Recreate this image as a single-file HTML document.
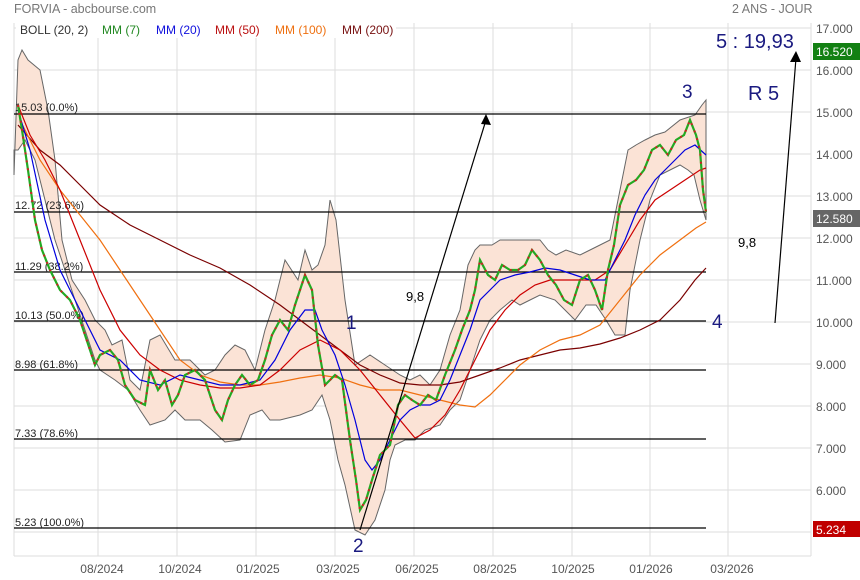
<!DOCTYPE html><html><head><meta charset="utf-8"><style>body{margin:0;background:#fff}svg{display:block;font-family:"Liberation Sans",sans-serif}</style></head><body>
<svg width="860" height="580" viewBox="0 0 860 580">
<rect width="860" height="580" fill="#fff"/>
<text x="14" y="13" font-size="12.5" fill="#777">FORVIA - abcbourse.com</text>
<text x="732" y="13" font-size="12.5" fill="#777">2 ANS - JOUR</text>
<g stroke="#ddd" stroke-width="1">
<line x1="14" y1="28" x2="811" y2="28"/><line x1="14" y1="70" x2="811" y2="70"/><line x1="14" y1="112" x2="811" y2="112"/><line x1="14" y1="154" x2="811" y2="154"/><line x1="14" y1="196" x2="811" y2="196"/><line x1="14" y1="238" x2="811" y2="238"/><line x1="14" y1="280" x2="811" y2="280"/><line x1="14" y1="322" x2="811" y2="322"/><line x1="14" y1="364" x2="811" y2="364"/><line x1="14" y1="406" x2="811" y2="406"/><line x1="14" y1="448" x2="811" y2="448"/><line x1="14" y1="490" x2="811" y2="490"/><line x1="14" y1="532" x2="811" y2="532"/>
<line x1="98" y1="23" x2="98" y2="556"/><line x1="177" y1="23" x2="177" y2="556"/><line x1="256" y1="23" x2="256" y2="556"/><line x1="335" y1="23" x2="335" y2="556"/><line x1="414" y1="23" x2="414" y2="556"/><line x1="493" y1="23" x2="493" y2="556"/><line x1="572" y1="23" x2="572" y2="556"/><line x1="650" y1="23" x2="650" y2="556"/><line x1="728" y1="23" x2="728" y2="556"/>
<line x1="14" y1="23" x2="14" y2="556"/><line x1="811" y1="23" x2="811" y2="556"/><line x1="14" y1="556" x2="811" y2="556"/>
</g>
<polygon fill="#fbe3d6" stroke="#666" stroke-width="1" points="14,175 18,60 22,50 28,60 40,70 48,110 55,160 62,240 72,280 85,300 95,320 105,330 112,345 122,340 130,380 140,390 150,340 160,335 175,360 190,360 205,375 215,370 225,355 235,345 245,350 255,370 265,330 275,300 285,260 298,280 305,250 312,270 318,265 325,245 330,200 336,220 345,300 355,365 370,355 385,365 400,375 410,380 420,375 430,385 440,370 450,335 460,310 468,265 475,250 480,245 492,245 500,240 520,240 540,240 548,250 556,255 566,250 580,255 590,250 600,245 610,240 620,190 628,150 636,145 645,140 655,135 665,132 680,120 695,115 702,105 706,100 706,220 700,200 694,175 688,170 680,165 670,170 660,175 650,200 640,240 630,290 625,335 615,335 606,320 596,305 586,305 575,320 565,310 555,300 540,295 530,300 520,305 512,300 500,310 490,320 480,340 470,370 460,400 450,410 440,425 425,430 415,440 405,440 395,445 390,460 385,490 375,520 365,535 355,530 345,485 338,460 330,420 322,395 312,410 300,415 280,420 270,420 262,410 250,415 240,440 225,442 212,430 200,420 185,420 175,410 165,420 150,425 140,410 128,390 115,380 100,370 95,360 85,330 75,300 65,270 55,240 45,200 35,160 25,140 18,150 14,150"/>
<g stroke="#000" stroke-width="1.2">
<line x1="14" y1="114" x2="706" y2="114"/><line x1="14" y1="212" x2="706" y2="212"/><line x1="14" y1="272" x2="706" y2="272"/><line x1="14" y1="321" x2="706" y2="321"/><line x1="14" y1="370" x2="706" y2="370"/><line x1="14" y1="439" x2="706" y2="439"/><line x1="14" y1="528" x2="706" y2="528"/>
</g>
<g font-size="11" fill="#222">
<text x="15" y="111">15.03  (0.0%)</text><text x="15" y="209">12.72  (23.6%)</text><text x="15" y="270">11.29  (38.2%)</text><text x="15" y="319">10.13  (50.0%)</text><text x="15" y="368">8.98  (61.8%)</text><text x="15" y="437">7.33  (78.6%)</text><text x="15" y="526">5.23  (100.0%)</text>
</g>
<g fill="none" stroke-width="1.2">
<polyline stroke="#7a0000" points="18,125 40,150 60,165 80,185 100,205 130,225 160,240 190,255 220,268 250,285 280,305 300,320 320,335 340,350 360,365 380,375 400,383 420,385 440,385 460,382 480,375 500,368 520,360 540,355 560,350 580,348 600,344 620,338 640,330 660,320 680,300 695,280 706,268"/>
<polyline stroke="#f07010" points="20,120 40,160 60,190 80,215 100,240 120,270 140,300 160,330 180,360 200,375 220,382 240,385 260,385 280,382 300,378 320,375 340,378 360,385 380,390 400,390 420,395 440,400 460,405 475,407 490,395 505,380 520,365 540,350 560,340 580,335 600,325 620,300 640,275 660,255 680,240 696,228 706,222"/>
<polyline stroke="#cc0000" points="18,105 30,135 45,160 60,190 80,240 100,290 120,330 140,355 160,370 180,380 200,385 220,388 240,388 260,385 280,370 300,350 320,340 340,350 360,370 380,395 400,420 415,438 430,430 445,415 460,390 475,360 490,330 505,310 520,295 535,285 550,280 580,280 595,280 610,270 625,245 640,220 655,200 670,190 685,180 700,170 706,168"/>
<polyline stroke="#0000dd" points="18,110 30,150 45,220 60,270 80,310 100,350 120,360 140,380 160,385 180,375 200,380 220,385 240,385 260,380 275,360 290,330 305,310 315,310 322,330 335,355 345,385 355,420 365,460 372,470 380,460 390,440 400,420 410,410 420,405 430,405 440,400 450,380 460,355 470,330 480,300 490,290 500,280 515,275 530,272 545,268 560,270 575,275 590,280 605,280 615,260 625,240 635,215 645,195 655,180 665,170 675,160 685,150 695,145 706,155"/>
<polyline stroke="#22aa22" stroke-width="2.2" points="18,105 22,130 28,170 35,220 42,250 50,270 60,290 70,300 80,320 90,350 95,365 100,355 110,350 118,360 125,385 135,400 145,405 150,370 158,390 165,380 172,405 178,395 185,375 195,370 205,380 210,395 215,410 222,420 228,400 235,385 242,375 250,385 258,380 265,360 272,335 280,320 288,330 295,305 305,275 312,290 318,345 325,385 335,375 342,380 350,440 356,480 360,510 366,500 372,480 380,455 390,445 398,405 405,395 412,400 420,405 428,395 436,400 445,375 455,350 462,330 470,310 475,290 480,260 488,275 495,280 502,265 510,270 518,270 525,265 532,250 540,260 548,275 556,285 564,300 572,305 580,280 588,275 595,290 602,310 608,270 614,245 620,205 628,185 636,180 644,170 652,150 660,145 668,155 676,140 684,135 690,120 696,135 700,150 703,190 706,212"/>
<polyline stroke="#cc2222" stroke-width="2" stroke-dasharray="2 6" points="18,105 22,130 28,170 35,220 42,250 50,270 60,290 70,300 80,320 90,350 95,365 100,355 110,350 118,360 125,385 135,400 145,405 150,370 158,390 165,380 172,405 178,395 185,375 195,370 205,380 210,395 215,410 222,420 228,400 235,385 242,375 250,385 258,380 265,360 272,335 280,320 288,330 295,305 305,275 312,290 318,345 325,385 335,375 342,380 350,440 356,480 360,510 366,500 372,480 380,455 390,445 398,405 405,395 412,400 420,405 428,395 436,400 445,375 455,350 462,330 470,310 475,290 480,260 488,275 495,280 502,265 510,270 518,270 525,265 532,250 540,260 548,275 556,285 564,300 572,305 580,280 588,275 595,290 602,310 608,270 614,245 620,205 628,185 636,180 644,170 652,150 660,145 668,155 676,140 684,135 690,120 696,135 700,150 703,190 706,212"/>
<line x1="360" y1="530" x2="486" y2="120" stroke="#000"/>
<line x1="775" y1="323" x2="796" y2="58" stroke="#000"/>
</g>
<polygon points="486,114 481,124 491,125" fill="#000"/>
<polygon points="796,51 790,62 801,62" fill="#000"/>
<rect x="16" y="20" width="380" height="18" fill="#fff"/>
<g font-size="12">
<text x="20" y="34" fill="#333">BOLL (20, 2)</text><text x="102" y="34" fill="#228822">MM (7)</text><text x="156" y="34" fill="#1010dd">MM (20)</text><text x="215" y="34" fill="#bb1111">MM (50)</text><text x="275" y="34" fill="#ee7010">MM (100)</text><text x="342" y="34" fill="#771111">MM (200)</text>
</g>
<g fill="#1a1a80" font-size="19">
<text x="346" y="329">1</text><text x="353" y="552">2</text><text x="682" y="98">3</text><text x="712" y="328">4</text><text x="748" y="100" font-size="20">R 5</text><text x="716" y="48" font-size="20">5 : 19,93</text>
</g>
<text x="406" y="301" font-size="13">9,8</text><text x="738" y="247" font-size="13">9,8</text>
<g font-size="12" fill="#555">
<text x="816" y="33">17.000</text><text x="816" y="75">16.000</text><text x="816" y="117">15.000</text><text x="816" y="159">14.000</text><text x="816" y="201">13.000</text><text x="816" y="243">12.000</text><text x="816" y="285">11.000</text><text x="816" y="327">10.000</text><text x="816" y="369">9.000</text><text x="816" y="411">8.000</text><text x="816" y="453">7.000</text><text x="816" y="495">6.000</text><text x="816" y="537">5.000</text>
</g>
<rect x="813" y="43" width="47" height="17" fill="#138013"/><text x="816" y="56" font-size="12" fill="#fff">16.520</text>
<rect x="813" y="210" width="47" height="17" fill="#666"/><text x="816" y="223" font-size="12" fill="#fff">12.580</text>
<rect x="813" y="521" width="47" height="16" fill="#c00000"/><text x="816" y="534" font-size="12" fill="#fff">5.234</text>
<g font-size="12" fill="#555" text-anchor="middle">
<text x="102" y="573">08/2024</text><text x="180" y="573">10/2024</text><text x="258" y="573">01/2025</text><text x="338" y="573">03/2025</text><text x="417" y="573">06/2025</text><text x="495" y="573">08/2025</text><text x="573" y="573">10/2025</text><text x="651" y="573">01/2026</text><text x="732" y="573">03/2026</text>
</g>
</svg>
</body></html>
